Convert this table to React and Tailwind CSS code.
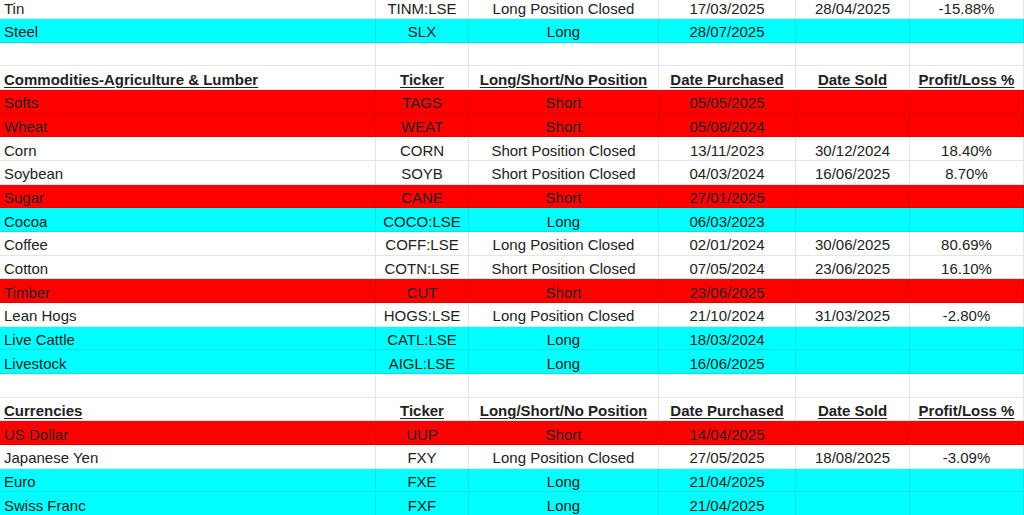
import React from "react";

const rows = [
  { c: "w", d: ["Tin", "TINM:LSE", "Long Position Closed", "17/03/2025", "28/04/2025", "-15.88%"] },
  { c: "c", d: ["Steel", "SLX", "Long", "28/07/2025", "", ""] },
  { c: "w", d: ["", "", "", "", "", ""] },
  { c: "h", d: ["Commodities-Agriculture & Lumber", "Ticker", "Long/Short/No Position", "Date Purchased", "Date Sold", "Profit/Loss %"] },
  { c: "r", d: ["Softs", "TAGS", "Short", "05/05/2025", "", ""] },
  { c: "r", d: ["Wheat", "WEAT", "Short", "05/08/2024", "", ""] },
  { c: "w", d: ["Corn", "CORN", "Short Position Closed", "13/11/2023", "30/12/2024", "18.40%"] },
  { c: "w", d: ["Soybean", "SOYB", "Short Position Closed", "04/03/2024", "16/06/2025", "8.70%"] },
  { c: "r", d: ["Sugar", "CANE", "Short", "27/01/2025", "", ""] },
  { c: "c", d: ["Cocoa", "COCO:LSE", "Long", "06/03/2023", "", ""] },
  { c: "w", d: ["Coffee", "COFF:LSE", "Long Position Closed", "02/01/2024", "30/06/2025", "80.69%"] },
  { c: "w", d: ["Cotton", "COTN:LSE", "Short Position Closed", "07/05/2024", "23/06/2025", "16.10%"] },
  { c: "r", d: ["Timber", "CUT", "Short", "23/06/2025", "", ""] },
  { c: "w", d: ["Lean Hogs", "HOGS:LSE", "Long Position Closed", "21/10/2024", "31/03/2025", "-2.80%"] },
  { c: "c", d: ["Live Cattle", "CATL:LSE", "Long", "18/03/2024", "", ""] },
  { c: "c", d: ["Livestock", "AIGL:LSE", "Long", "16/06/2025", "", ""] },
  { c: "w", d: ["", "", "", "", "", ""] },
  { c: "h", d: ["Currencies", "Ticker", "Long/Short/No Position", "Date Purchased", "Date Sold", "Profit/Loss %"] },
  { c: "r", d: ["US Dollar", "UUP", "Short", "14/04/2025", "", ""] },
  { c: "w", d: ["Japanese Yen", "FXY", "Long Position Closed", "27/05/2025", "18/08/2025", "-3.09%"] },
  { c: "c", d: ["Euro", "FXE", "Long", "21/04/2025", "", ""] },
  { c: "c", d: ["Swiss Franc", "FXF", "Long", "21/04/2025", "", ""] },
];

const bg = { w: "bg-white", h: "bg-white", r: "bg-[#ff0000]", c: "bg-[#00ffff]" };

export default function App() {
  return (
    <div className="w-[1024px] h-[515px] overflow-hidden bg-white" style={{ fontFamily: '"Liberation Sans", Arial, sans-serif' }}>
      <div className="mt-[-4.7px] flex flex-col">
        {rows.map((row, i) => (
          <div
            key={i}
            className={`grid grid-cols-[376px_93px_190px_137px_114px_114px] h-[23.685px] shrink-0 ${bg[row.c]} text-[15px] leading-none text-[#222222]`}
          >
            {row.d.map((t, j) => (
              <div
                key={j}
                className={`flex items-center pt-[3px] border-r border-b border-[rgba(0,0,0,0.1)] overflow-hidden whitespace-nowrap ${
                  j === 0 ? "justify-start pl-[4px]" : "justify-center"
                } ${row.c === "h" ? "font-bold underline underline-offset-2 decoration-1" : ""}`}
              >
                {t}
              </div>
            ))}
          </div>
        ))}
      </div>
    </div>
  );
}
